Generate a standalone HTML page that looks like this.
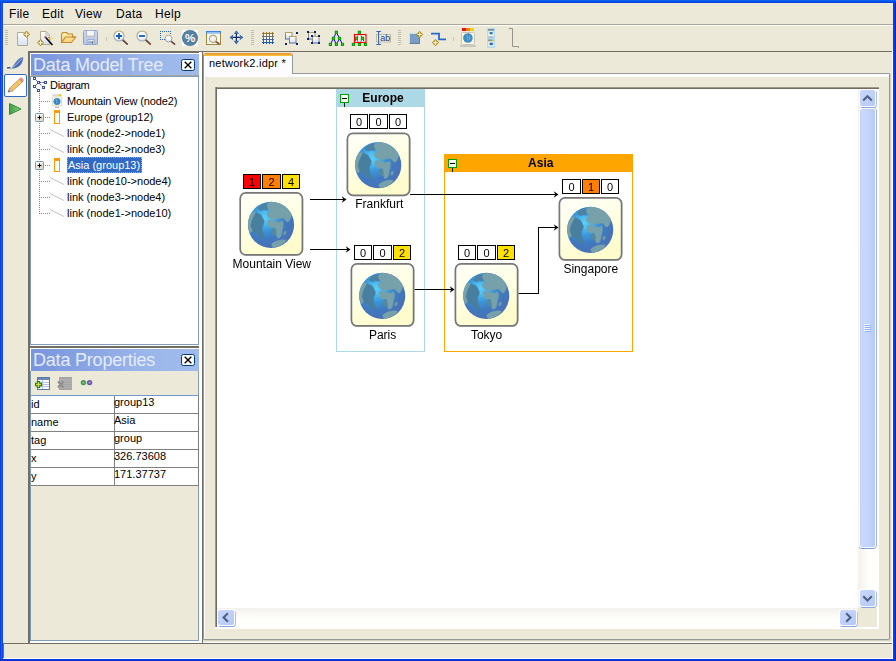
<!DOCTYPE html>
<html>
<head>
<meta charset="utf-8">
<title>network2.idpr</title>
<style>
html,body{margin:0;padding:0;}
body{width:896px;height:661px;position:relative;overflow:hidden;background:#0b35dc;font-family:"Liberation Sans","DejaVu Sans",sans-serif;font-size:11px;color:#000;}
.a{position:absolute;}
#win{left:3px;top:3px;width:890px;height:656px;background:#ece9d8;}
.menu span{position:absolute;top:7px;font-size:12px;line-height:14px;white-space:nowrap;letter-spacing:0.3px;}
.hl{position:absolute;height:1px;}
.vl{position:absolute;width:1px;}
.hdr{position:absolute;left:31px;width:168px;height:22px;background:linear-gradient(90deg,#7995de 0%,#8aa5e3 35%,#9ab5e9 65%,#a0bbeb 100%);}
.hdr .t{position:absolute;left:2px;top:0px;font-size:18px;line-height:22px;color:#e4ebfb;letter-spacing:-0.2px;white-space:nowrap;}
.xbtn{position:absolute;left:149px;top:4px;width:11px;height:10px;border:1px solid #000;background:#fff;border-radius:1px;}
.tree div{position:absolute;left:67px;height:16px;line-height:16px;font-size:11px;white-space:nowrap;}
.tbl div{position:absolute;font-size:11px;line-height:13px;white-space:nowrap;}
.lbl{position:absolute;font-size:12px;line-height:14px;text-align:center;white-space:nowrap;letter-spacing:0.45px;}
.bd{position:absolute;width:17px;height:12px;border:1px solid #000;background:#fff;font-size:11px;line-height:13px;text-align:center;}
</style>
</head>
<body>
<div class="a" style="left:0;top:0;width:896px;height:3px;background:linear-gradient(#0a6af2,#0a50ea 50%,#0a3cde)"></div>
<div class="a" style="left:0;top:2px;width:3px;height:659px;background:linear-gradient(90deg,#0a36d8,#1c58ee 50%,#0a44e6)"></div>
<div class="a" style="left:893px;top:2px;width:3px;height:659px;background:linear-gradient(90deg,#0a40e8,#0a3ae0 60%,#001ca8)"></div>
<div class="a" style="left:0;top:659px;width:896px;height:2px;background:linear-gradient(#0a3ee6,#0a2cc8)"></div>
<div id="win" class="a"></div>
<div class="a" style="left:892px;top:51px;width:1px;height:608px;background:#fff"></div>
<div class="a" style="left:3px;top:658px;width:890px;height:1px;background:#fff"></div>
<div class="a" style="left:203px;top:642px;width:690px;height:1px;background:#fff"></div>

<!-- MENU BAR -->
<div class="menu a" style="left:0;top:0;width:896px;height:24px;">
<span style="left:9px">File</span><span style="left:42px">Edit</span><span style="left:75px">View</span><span style="left:116px">Data</span><span style="left:155px">Help</span>
</div>
<div class="hl" style="left:3px;top:24px;width:890px;background:#aca899"></div>
<div class="hl" style="left:3px;top:25px;width:890px;background:#fff"></div>

<!-- TOOLBAR placeholder -->
<div id="toolbar" class="a" style="left:3px;top:26px;width:890px;height:25px;"><svg class="a" style="left:0;top:0" width="890" height="25" viewBox="3 26 890 25" font-family="Liberation Sans, sans-serif">
<defs>
<linearGradient id="pg" x1="0" y1="0" x2="0" y2="1"><stop offset="0" stop-color="#ffffff"/><stop offset="1" stop-color="#d4e0f6"/></linearGradient>
<linearGradient id="lensg" x1="0" y1="0" x2="0" y2="1"><stop offset="0" stop-color="#ffffff"/><stop offset="0.7" stop-color="#f4f4f4"/><stop offset="1" stop-color="#d8dde4"/></linearGradient>
<linearGradient id="lensr" x1="0" y1="0" x2="0" y2="1"><stop offset="0" stop-color="#b4a26e"/><stop offset="1" stop-color="#97a7c9"/></linearGradient>
<linearGradient id="gridg" x1="0" y1="32" x2="0" y2="44" gradientUnits="userSpaceOnUse"><stop offset="0" stop-color="#a57d1c"/><stop offset="0.5" stop-color="#5b7080"/><stop offset="1" stop-color="#0b55b8"/></linearGradient>
<linearGradient id="sqb" x1="0" y1="0" x2="0" y2="1"><stop offset="0" stop-color="#b7a064"/><stop offset="1" stop-color="#5a6a9a"/></linearGradient>
<linearGradient id="saveg" x1="0" y1="0" x2="0" y2="1"><stop offset="0" stop-color="#d2dbee"/><stop offset="1" stop-color="#b4c3e2"/></linearGradient>
<linearGradient id="foldg" x1="0" y1="0" x2="0" y2="1"><stop offset="0" stop-color="#fff0b8"/><stop offset="1" stop-color="#f8d078"/></linearGradient>
</defs>
<rect x="5" y="30" width="3" height="1" fill="#c1bda9"/><rect x="5" y="32" width="3" height="1" fill="#c1bda9"/><rect x="5" y="34" width="3" height="1" fill="#c1bda9"/><rect x="5" y="36" width="3" height="1" fill="#c1bda9"/><rect x="5" y="38" width="3" height="1" fill="#c1bda9"/><rect x="5" y="40" width="3" height="1" fill="#c1bda9"/><rect x="5" y="42" width="3" height="1" fill="#c1bda9"/><rect x="5" y="44" width="3" height="1" fill="#c1bda9"/>
<!-- new -->
<path d="M17.5 32.5 H24 L27.5 36 V45.5 H17.5 Z" fill="url(#pg)" stroke="#b3a890" stroke-width="1"/>
<path d="M26.5 31.1 L29.7 34.3 L26.5 37.5 L23.3 34.3 Z" fill="#b98f18" stroke="#a07a10" stroke-width="0.6"/><path d="M26.5 32.2 V36.4 M24.4 34.3 H28.6" stroke="#fff8e0" stroke-width="1.1"/>
<!-- wizard -->
<path d="M40.5 31.5 H46 L49.5 35 V44.5 H40.5 Z" fill="url(#pg)" stroke="#b3a890" stroke-width="1"/>
<path d="M46 31.5 V35 H49.5" fill="none" stroke="#b3a890" stroke-width="0.8"/>
<path d="M45.3 37 L52.4 45" stroke="#101020" stroke-width="1.8"/><path d="M44.8 36.4 L46.2 38" stroke="#d0483c" stroke-width="1.8"/>
<rect x="49" y="35.5" width="1" height="1" fill="#f0d020"/><rect x="51" y="36.5" width="1" height="1" fill="#f0d020"/><rect x="50" y="38.5" width="1" height="1" fill="#e8b020"/><rect x="52" y="38" width="1" height="1" fill="#f0d020"/><rect x="48" y="37" width="1" height="1" fill="#d07030"/>
<path d="M40.5 39.4 L43.7 42.6 L40.5 45.8 L37.3 42.6 Z" fill="#b98f18" stroke="#a07a10" stroke-width="0.6"/><path d="M40.5 40.5 V44.7 M38.4 42.6 H42.6" stroke="#fff8e0" stroke-width="1.1"/>
<!-- open -->
<path d="M61.5 42.5 V34 L63 32.5 H66.5 L68 34 H72.5 V37 H75.8 L71.5 42.5 Z" fill="url(#foldg)" stroke="#c48a2c" stroke-width="1.1" stroke-linejoin="round"/>
<path d="M61.8 42.3 L65.5 37 H75.8" fill="none" stroke="#c48a2c" stroke-width="1.1"/>
<!-- save -->
<rect x="83.5" y="30.5" width="14" height="14" rx="1.2" fill="url(#saveg)" stroke="#8fa3cf" stroke-width="1"/>
<rect x="86.5" y="30.5" width="8" height="6" fill="#f4f6fb" stroke="#9aaad0" stroke-width="0.8"/><rect x="87" y="35.3" width="7" height="1" fill="#f0d8a0"/>
<rect x="88" y="39.5" width="6" height="5" fill="#dfe6f4" stroke="#8fa3cf" stroke-width="0.8"/><rect x="88.5" y="41.5" width="3.5" height="2" fill="#7fa0e0"/><rect x="92" y="41" width="1" height="3" fill="#7a8a6a"/>
<rect x="106" y="37" width="1" height="4" fill="#c8c4b0"/>
<!-- zoom in / out -->
<path d="M122.25 39.5 L127.25 44.1" stroke="#6e463c" stroke-width="1.7" stroke-linecap="round"/><circle cx="119" cy="36" r="5" fill="url(#lensg)" stroke="url(#lensr)" stroke-width="1.1"/><path d="M116 36 H122 M119 33 V39" stroke="#1560b0" stroke-width="1.8"/>
<path d="M145.25 39.5 L150.25 44.1" stroke="#6e463c" stroke-width="1.7" stroke-linecap="round"/><circle cx="142" cy="36" r="5" fill="url(#lensg)" stroke="url(#lensr)" stroke-width="1.1"/><path d="M139 36 H145" stroke="#1560b0" stroke-width="1.8"/>
<!-- zoom rect -->
<rect x="160" y="31" width="1" height="1" fill="#2464c4"/><rect x="162" y="31" width="1" height="1" fill="#2464c4"/><rect x="164" y="31" width="1" height="1" fill="#2464c4"/><rect x="166" y="31" width="1" height="1" fill="#2464c4"/><rect x="168" y="31" width="1" height="1" fill="#2464c4"/><rect x="170" y="31" width="1" height="1" fill="#2464c4"/><rect x="160" y="33" width="1" height="1" fill="#2464c4"/><rect x="160" y="35" width="1" height="1" fill="#2464c4"/><rect x="160" y="37" width="1" height="1" fill="#2464c4"/><rect x="160" y="39" width="1" height="1" fill="#2464c4"/><rect x="162" y="39" width="1" height="1" fill="#2464c4"/><rect x="164" y="39" width="1" height="1" fill="#2464c4"/><rect x="170" y="33" width="1" height="1" fill="#2464c4"/>
<path d="M170.6 40.8 L174.6 44.2" stroke="#6e463c" stroke-width="1.6" stroke-linecap="round"/><circle cx="168.5" cy="38.5" r="3.4" fill="url(#lensg)" stroke="url(#lensr)" stroke-width="1"/>
<!-- percent -->
<rect x="182" y="30" width="16" height="16" fill="#fff"/><circle cx="190" cy="38" r="8" fill="#4f7c9e"/><circle cx="190" cy="38" r="6" fill="none" stroke="#6a92b0" stroke-width="1" opacity="0.6"/>
<text x="190" y="42" text-anchor="middle" font-size="11.5" font-weight="bold" fill="#fff">%</text>
<!-- fit -->
<rect x="206.5" y="31.5" width="14" height="13" fill="#eefaff" stroke="#a28a3a" stroke-width="1"/><rect x="206" y="31" width="15" height="2.4" fill="#3c84dc"/><rect x="207" y="32" width="13" height="0.8" fill="#a8d0f8"/>
<path d="M215.5 41.5 L219.5 44" stroke="#8a5040" stroke-width="1.6"/><circle cx="213" cy="38.8" r="3.7" fill="#f2f2f2" stroke="#a89048" stroke-width="1"/>
<!-- pan -->
<path d="M236.4 31 V43.8 M230 37.4 H242.8" stroke="#1c2468" stroke-width="1.2"/>
<path d="M236.4 30.6 L239.2 34 H233.6 Z M236.4 44.2 L239.2 40.8 H233.6 Z M229.6 37.4 L233 34.6 V40.2 Z M243.2 37.4 L239.8 34.6 V40.2 Z" fill="#3a6ea8"/>
<rect x="251" y="30" width="3" height="1" fill="#c1bda9"/><rect x="251" y="32" width="3" height="1" fill="#c1bda9"/><rect x="251" y="34" width="3" height="1" fill="#c1bda9"/><rect x="251" y="36" width="3" height="1" fill="#c1bda9"/><rect x="251" y="38" width="3" height="1" fill="#c1bda9"/><rect x="251" y="40" width="3" height="1" fill="#c1bda9"/><rect x="251" y="42" width="3" height="1" fill="#c1bda9"/><rect x="251" y="44" width="3" height="1" fill="#c1bda9"/>
<!-- grid -->
<rect x="263" y="33" width="10" height="10" fill="#fff"/>
<path d="M263.5 32 V44 M266.5 32 V44 M269.5 32 V44 M272.5 32 V44 M262 33.5 H274 M262 36.5 H274 M262 39.5 H274 M262 42.5 H274" stroke="url(#gridg)" stroke-width="1.1"/>
<!-- group1 -->
<rect x="285.5" y="32.5" width="6.5" height="6.5" fill="url(#pg)" stroke="url(#sqb)" stroke-width="1"/><rect x="289.5" y="36.5" width="6.5" height="6.5" fill="url(#pg)" stroke="url(#sqb)" stroke-width="1"/>
<rect x="296" y="32" width="2" height="2" fill="#0a246a"/><rect x="285" y="43" width="2" height="2" fill="#0a246a"/><rect x="296" y="43" width="2" height="2" fill="#0a246a"/>
<!-- group2 -->
<rect x="308.5" y="32.5" width="6.5" height="6.5" fill="url(#pg)" stroke="url(#sqb)" stroke-width="1"/><rect x="312.5" y="36.5" width="6.5" height="6.5" fill="url(#pg)" stroke="url(#sqb)" stroke-width="1"/>
<rect x="307" y="31" width="2" height="2" fill="#0a246a"/><rect x="314" y="31" width="2" height="2" fill="#0a246a"/><rect x="307" y="38" width="2" height="2" fill="#0a246a"/><rect x="311" y="35" width="2" height="2" fill="#0a246a"/><rect x="318" y="35" width="2" height="2" fill="#0a246a"/><rect x="311" y="42" width="2" height="2" fill="#0a246a"/><rect x="318" y="42" width="2" height="2" fill="#0a246a"/>
<!-- tree1/tree2 -->
<path d="M336.4 32.3 L330.4 44.4 M336.4 32.3 L342.5 44.4 M333.4 38.4 L336.4 44.4 L339.5 38.4" stroke="#0000ff" stroke-width="1" fill="none"/><rect x="334.8" y="30.7" width="3.2" height="3.2" fill="#0c9c0c"/><rect x="335.9" y="31.8" width="1" height="1" fill="#58d058"/><rect x="331.8" y="36.8" width="3.2" height="3.2" fill="#0c9c0c"/><rect x="332.9" y="37.9" width="1" height="1" fill="#58d058"/><rect x="337.9" y="36.8" width="3.2" height="3.2" fill="#0c9c0c"/><rect x="339.0" y="37.9" width="1" height="1" fill="#58d058"/><rect x="328.8" y="42.8" width="3.2" height="3.2" fill="#0c9c0c"/><rect x="329.9" y="43.9" width="1" height="1" fill="#58d058"/><rect x="334.8" y="42.8" width="3.2" height="3.2" fill="#0c9c0c"/><rect x="335.9" y="43.9" width="1" height="1" fill="#58d058"/><rect x="340.9" y="42.8" width="3.2" height="3.2" fill="#0c9c0c"/><rect x="342.0" y="43.9" width="1" height="1" fill="#58d058"/>
<path d="M359.4 32.3 L353.4 44.4 M359.4 32.3 L365.5 44.4 M356.4 38.4 L359.4 44.4 L362.5 38.4" stroke="#0000ff" stroke-width="1" fill="none" stroke-dasharray="1.2 1"/><rect x="357.8" y="30.7" width="3.2" height="3.2" fill="#0c9c0c"/><rect x="358.9" y="31.8" width="1" height="1" fill="#58d058"/><rect x="354.8" y="36.8" width="3.2" height="3.2" fill="#0c9c0c"/><rect x="355.9" y="37.9" width="1" height="1" fill="#58d058"/><rect x="360.9" y="36.8" width="3.2" height="3.2" fill="#0c9c0c"/><rect x="362.0" y="37.9" width="1" height="1" fill="#58d058"/><rect x="351.8" y="42.8" width="3.2" height="3.2" fill="#0c9c0c"/><rect x="352.9" y="43.9" width="1" height="1" fill="#58d058"/><rect x="357.8" y="42.8" width="3.2" height="3.2" fill="#0c9c0c"/><rect x="358.9" y="43.9" width="1" height="1" fill="#58d058"/><rect x="363.9" y="42.8" width="3.2" height="3.2" fill="#0c9c0c"/><rect x="365.0" y="43.9" width="1" height="1" fill="#58d058"/><rect x="354.5" y="34.5" width="11.5" height="8" fill="none" stroke="#ff0000" stroke-width="1.1"/>
<!-- ab -->
<rect x="376.5" y="34.5" width="14" height="7.5" fill="#e8f0f8" stroke="#b8b090" stroke-width="0.8"/>
<text x="385.3" y="41.2" text-anchor="middle" font-size="9" fill="#1c3464">ab</text>
<path d="M376.3 31.5 H381 M376.3 44.5 H381 M378.6 31.5 V44.5" stroke="#3a68b0" stroke-width="1.1" fill="none"/>
<rect x="398" y="30" width="3" height="1" fill="#c1bda9"/><rect x="398" y="32" width="3" height="1" fill="#c1bda9"/><rect x="398" y="34" width="3" height="1" fill="#c1bda9"/><rect x="398" y="36" width="3" height="1" fill="#c1bda9"/><rect x="398" y="38" width="3" height="1" fill="#c1bda9"/><rect x="398" y="40" width="3" height="1" fill="#c1bda9"/><rect x="398" y="42" width="3" height="1" fill="#c1bda9"/><rect x="398" y="44" width="3" height="1" fill="#c1bda9"/>
<!-- shape -->
<rect x="409" y="33" width="11" height="11" fill="#7b9cc4"/><path d="M409.5 44 V33.5 H420" fill="none" stroke="#b4ecf2" stroke-width="1"/><path d="M409.5 43.5 H419.5 V34" fill="none" stroke="#5f8098" stroke-width="1"/>
<path d="M419.6 31.3 L422.8 34.5 L419.6 37.7 L416.4 34.5 Z" fill="#b98f18" stroke="#a07a10" stroke-width="0.6"/><path d="M419.6 32.4 V36.6 M417.5 34.5 H421.7" stroke="#fff8e0" stroke-width="1.1"/>
<!-- link -->
<path d="M431 33.6 H439 V39.4 H446" fill="none" stroke="#2a6ad2" stroke-width="1.8"/>
<path d="M435.5 39.4 L438.7 42.6 L435.5 45.8 L432.3 42.6 Z" fill="#b98f18" stroke="#a07a10" stroke-width="0.6"/><path d="M435.5 40.5 V44.7 M433.4 42.6 H437.6" stroke="#fff8e0" stroke-width="1.1"/>
<rect x="453" y="37" width="1" height="4" fill="#c8c4b0"/>
<!-- node thumb -->
<rect x="462" y="28" width="4" height="3" fill="#e81010"/><rect x="466" y="28" width="4" height="3" fill="#f08010"/><rect x="470" y="28" width="4" height="3" fill="#f0d010"/>
<rect x="461.5" y="32.5" width="13" height="12" rx="1" fill="#fdfbdc" stroke="#b8b8b0" stroke-width="0.8"/><circle cx="467.9" cy="38" r="4.8" fill="#3f8cc8"/><path d="M466.5 35 q2 2 1 6 M469 36 q1.5 2 0.5 4" stroke="#6aa8c8" stroke-width="1.2" fill="none"/>
<rect x="460" y="45.6" width="16" height="1" fill="#9a9a9a" opacity="0.8"/>
<!-- list -->
<rect x="487" y="28" width="8" height="20" fill="#b2daf0"/>
<rect x="488" y="29" width="6" height="1.6" fill="#7a8c9c"/><rect x="488.3" y="31.4" width="5.4" height="4.8" fill="#fdf8d8"/><rect x="489.6" y="32" width="3" height="2.4" fill="#2a78d0"/><rect x="488.5" y="36.6" width="4.5" height="0.8" fill="#8a9aa8"/>
<rect x="488" y="39.5" width="4" height="1.4" fill="#8a8c8c"/><rect x="492" y="39.8" width="1.6" height="1.4" fill="#e8c020"/><rect x="488.3" y="41.6" width="5.4" height="4.8" fill="#fdf8d8"/><rect x="489.6" y="42.6" width="3.2" height="2.6" fill="#2a68c0"/>
<!-- bracket -->
<path d="M508.8 28.5 H512.5 V46.5 H518.5 V48" fill="none" stroke="#8c8a80" stroke-width="0.9"/>
</svg></div>
<div class="hl" style="left:28px;top:51px;width:864px;background:#716f64"></div>

<!-- LEFT TOOL STRIP placeholder -->
<div id="strip" class="a" style="left:3px;top:52px;width:25px;height:590px;"><svg class="a" style="left:0;top:0" width="25" height="70" viewBox="3 52 25 70">
<defs>
<linearGradient id="qg" x1="0" y1="0" x2="1" y2="1"><stop offset="0" stop-color="#7f9fd8"/><stop offset="1" stop-color="#2f4f9c"/></linearGradient>
<linearGradient id="plg" x1="0" y1="0" x2="1" y2="0"><stop offset="0" stop-color="#3c9c40"/><stop offset="1" stop-color="#8ed08e"/></linearGradient>
</defs>
<path d="M7 67.8 H10.5" stroke="#2c4a90" stroke-width="1.4"/>
<path d="M11.3 68.7 C13 66.5 14.8 62.5 17.8 59.8 C19.8 58 22 57.2 23.2 57.4 C23.2 60 22.4 63 20.2 65.2 C18 67.4 15 68.6 11.3 68.7 Z" fill="url(#qg)"/>
<path d="M12.5 68 L22 59" stroke="#c8d8f4" stroke-width="0.6"/>
<rect x="4.5" y="74.5" width="22" height="22" rx="1.5" fill="#fff" stroke="#316ac5" stroke-width="1"/>
<path d="M8.2 92 L9.6 88.2 L19.4 79 L22.4 82 L12.4 91 Z" fill="#f2c468" stroke="#b8864a" stroke-width="0.7"/>
<path d="M19.4 79 L20.6 78 C21.6 77.4 23.6 79.2 23.2 80.6 L22.4 82 Z" fill="#f09090" stroke="#c86868" stroke-width="0.6"/>
<path d="M8.2 92 L9.6 88.2 L12.4 91 Z" fill="#e8d0a8" stroke="#8a7a6a" stroke-width="0.5"/><path d="M8.2 92 L8.9 90.2 L10 91.4 Z" fill="#3a4a8a"/>
<path d="M9.5 103.5 L21 109 L9.5 114.5 Z" fill="url(#plg)" stroke="#2f8f34" stroke-width="1" stroke-linejoin="round"/>
</svg></div>

<!-- LEFT PANEL -->
<div id="left" class="a" style="left:0;top:0;width:203px;height:661px;">
<!-- bevel borders of the two left panels -->
<div class="a" style="left:28px;top:51px;width:2px;height:592px;background:#716f64"></div>
<div class="a" style="left:28px;top:51px;width:173px;height:2px;background:#716f64"></div>
<div class="a" style="left:30px;top:53px;width:171px;height:293px;background:#fff"></div>
<div class="a" style="left:30px;top:346px;width:171px;height:2px;background:#716f64"></div>
<div class="a" style="left:30px;top:348px;width:171px;height:295px;background:#fff"></div>
<!-- top panel: Data Model Tree -->
<div class="a" style="left:30px;top:53px;width:169px;height:292px;background:#7f9db9"></div>
<div class="a" style="left:30px;top:53px;width:169px;height:1px;background:#fff"></div>
<div class="a" style="left:30px;top:53px;width:1px;height:23px;background:#fff"></div>
<div class="hdr" style="top:54px;height:21px;"><span class="t">Data Model Tree</span>
 <svg class="a" style="left:150px;top:5px" width="14" height="12" viewBox="0 0 14 12"><rect x="0.5" y="0.5" width="13" height="11" rx="1.8" fill="#fdfcf6" stroke="#003c74"/><path d="M3.7 2.7 L10.3 9.3 M10.3 2.7 L3.7 9.3" stroke="#000" stroke-width="1.35"/></svg>
</div>
<div class="a" style="left:31px;top:75px;width:167px;height:1px;background:#aca899"></div>
<div class="a" style="left:31px;top:77px;width:167px;height:267px;background:#fff"></div>
<div id="tree" class="tree a" style="left:0;top:77px;width:200px;height:267px;">
<svg class="a" style="left:31px;top:0" width="36" height="267" viewBox="31 77 36 267"><defs><linearGradient id="pmg" x1="0" y1="0" x2="1" y2="1"><stop offset="0" stop-color="#ffffff"/><stop offset="1" stop-color="#d8d0bc"/></linearGradient></defs><path d="M34.5 78.5 L38.5 82.5 H45.5 M38.5 82.5 L34.5 86.5 L38.5 90.5 M38.5 82.5 L43.5 87.5" stroke="#3c4ea0" stroke-width="1" fill="none" stroke-dasharray="1.5 0.9"/><rect x="33.5" y="77.5" width="2" height="2" fill="#fff" stroke="#3c4ea0" stroke-width="1"/><rect x="37.5" y="81.5" width="2" height="2" fill="#fff" stroke="#3c4ea0" stroke-width="1"/><rect x="44.5" y="81.5" width="2" height="2" fill="#fff" stroke="#3c4ea0" stroke-width="1"/><rect x="33.5" y="85.5" width="2" height="2" fill="#fff" stroke="#3c4ea0" stroke-width="1"/><rect x="42.5" y="86.5" width="2" height="2" fill="#fff" stroke="#3c4ea0" stroke-width="1"/><rect x="37.5" y="89.5" width="2" height="2" fill="#fff" stroke="#3c4ea0" stroke-width="1"/><rect x="39" y="93" width="1" height="1" fill="#8a8a8a"/><rect x="39" y="95" width="1" height="1" fill="#8a8a8a"/><rect x="39" y="97" width="1" height="1" fill="#8a8a8a"/><rect x="39" y="99" width="1" height="1" fill="#8a8a8a"/><rect x="39" y="101" width="1" height="1" fill="#8a8a8a"/><rect x="39" y="103" width="1" height="1" fill="#8a8a8a"/><rect x="39" y="105" width="1" height="1" fill="#8a8a8a"/><rect x="39" y="107" width="1" height="1" fill="#8a8a8a"/><rect x="39" y="109" width="1" height="1" fill="#8a8a8a"/><rect x="39" y="111" width="1" height="1" fill="#8a8a8a"/><rect x="39" y="113" width="1" height="1" fill="#8a8a8a"/><rect x="39" y="115" width="1" height="1" fill="#8a8a8a"/><rect x="39" y="117" width="1" height="1" fill="#8a8a8a"/><rect x="39" y="119" width="1" height="1" fill="#8a8a8a"/><rect x="39" y="121" width="1" height="1" fill="#8a8a8a"/><rect x="39" y="123" width="1" height="1" fill="#8a8a8a"/><rect x="39" y="125" width="1" height="1" fill="#8a8a8a"/><rect x="39" y="127" width="1" height="1" fill="#8a8a8a"/><rect x="39" y="129" width="1" height="1" fill="#8a8a8a"/><rect x="39" y="131" width="1" height="1" fill="#8a8a8a"/><rect x="39" y="133" width="1" height="1" fill="#8a8a8a"/><rect x="39" y="135" width="1" height="1" fill="#8a8a8a"/><rect x="39" y="137" width="1" height="1" fill="#8a8a8a"/><rect x="39" y="139" width="1" height="1" fill="#8a8a8a"/><rect x="39" y="141" width="1" height="1" fill="#8a8a8a"/><rect x="39" y="143" width="1" height="1" fill="#8a8a8a"/><rect x="39" y="145" width="1" height="1" fill="#8a8a8a"/><rect x="39" y="147" width="1" height="1" fill="#8a8a8a"/><rect x="39" y="149" width="1" height="1" fill="#8a8a8a"/><rect x="39" y="151" width="1" height="1" fill="#8a8a8a"/><rect x="39" y="153" width="1" height="1" fill="#8a8a8a"/><rect x="39" y="155" width="1" height="1" fill="#8a8a8a"/><rect x="39" y="157" width="1" height="1" fill="#8a8a8a"/><rect x="39" y="159" width="1" height="1" fill="#8a8a8a"/><rect x="39" y="161" width="1" height="1" fill="#8a8a8a"/><rect x="39" y="163" width="1" height="1" fill="#8a8a8a"/><rect x="39" y="165" width="1" height="1" fill="#8a8a8a"/><rect x="39" y="167" width="1" height="1" fill="#8a8a8a"/><rect x="39" y="169" width="1" height="1" fill="#8a8a8a"/><rect x="39" y="171" width="1" height="1" fill="#8a8a8a"/><rect x="39" y="173" width="1" height="1" fill="#8a8a8a"/><rect x="39" y="175" width="1" height="1" fill="#8a8a8a"/><rect x="39" y="177" width="1" height="1" fill="#8a8a8a"/><rect x="39" y="179" width="1" height="1" fill="#8a8a8a"/><rect x="39" y="181" width="1" height="1" fill="#8a8a8a"/><rect x="39" y="183" width="1" height="1" fill="#8a8a8a"/><rect x="39" y="185" width="1" height="1" fill="#8a8a8a"/><rect x="39" y="187" width="1" height="1" fill="#8a8a8a"/><rect x="39" y="189" width="1" height="1" fill="#8a8a8a"/><rect x="39" y="191" width="1" height="1" fill="#8a8a8a"/><rect x="39" y="193" width="1" height="1" fill="#8a8a8a"/><rect x="39" y="195" width="1" height="1" fill="#8a8a8a"/><rect x="39" y="197" width="1" height="1" fill="#8a8a8a"/><rect x="39" y="199" width="1" height="1" fill="#8a8a8a"/><rect x="39" y="201" width="1" height="1" fill="#8a8a8a"/><rect x="39" y="203" width="1" height="1" fill="#8a8a8a"/><rect x="39" y="205" width="1" height="1" fill="#8a8a8a"/><rect x="39" y="207" width="1" height="1" fill="#8a8a8a"/><rect x="39" y="209" width="1" height="1" fill="#8a8a8a"/><rect x="39" y="211" width="1" height="1" fill="#8a8a8a"/><rect x="39" y="213" width="1" height="1" fill="#8a8a8a"/><rect x="41" y="101" width="1" height="1" fill="#8a8a8a"/><rect x="43" y="101" width="1" height="1" fill="#8a8a8a"/><rect x="45" y="101" width="1" height="1" fill="#8a8a8a"/><rect x="47" y="101" width="1" height="1" fill="#8a8a8a"/><rect x="49" y="101" width="1" height="1" fill="#8a8a8a"/><rect x="35.5" y="113.5" width="8" height="8" rx="1" fill="url(#pmg)" stroke="#7898b5" stroke-width="1"/><path d="M37.5 117.5 H41.5 M39.5 115.5 V119.5" stroke="#000" stroke-width="1"/><rect x="45" y="117" width="1" height="1" fill="#8a8a8a"/><rect x="47" y="117" width="1" height="1" fill="#8a8a8a"/><rect x="49" y="117" width="1" height="1" fill="#8a8a8a"/><rect x="54.5" y="110.5" width="5" height="13" fill="#fff" stroke="#ff9a00" stroke-width="1"/><rect x="54" y="110" width="6" height="3" fill="#ff9a00"/><rect x="41" y="133" width="1" height="1" fill="#8a8a8a"/><rect x="43" y="133" width="1" height="1" fill="#8a8a8a"/><rect x="45" y="133" width="1" height="1" fill="#8a8a8a"/><rect x="47" y="133" width="1" height="1" fill="#8a8a8a"/><rect x="49" y="133" width="1" height="1" fill="#8a8a8a"/><rect x="41" y="149" width="1" height="1" fill="#8a8a8a"/><rect x="43" y="149" width="1" height="1" fill="#8a8a8a"/><rect x="45" y="149" width="1" height="1" fill="#8a8a8a"/><rect x="47" y="149" width="1" height="1" fill="#8a8a8a"/><rect x="49" y="149" width="1" height="1" fill="#8a8a8a"/><rect x="35.5" y="161.5" width="8" height="8" rx="1" fill="url(#pmg)" stroke="#7898b5" stroke-width="1"/><path d="M37.5 165.5 H41.5 M39.5 163.5 V167.5" stroke="#000" stroke-width="1"/><rect x="45" y="165" width="1" height="1" fill="#8a8a8a"/><rect x="47" y="165" width="1" height="1" fill="#8a8a8a"/><rect x="49" y="165" width="1" height="1" fill="#8a8a8a"/><rect x="54.5" y="158.5" width="5" height="13" fill="#fff" stroke="#ff9a00" stroke-width="1"/><rect x="54" y="158" width="6" height="3" fill="#ff9a00"/><rect x="41" y="181" width="1" height="1" fill="#8a8a8a"/><rect x="43" y="181" width="1" height="1" fill="#8a8a8a"/><rect x="45" y="181" width="1" height="1" fill="#8a8a8a"/><rect x="47" y="181" width="1" height="1" fill="#8a8a8a"/><rect x="49" y="181" width="1" height="1" fill="#8a8a8a"/><rect x="41" y="197" width="1" height="1" fill="#8a8a8a"/><rect x="43" y="197" width="1" height="1" fill="#8a8a8a"/><rect x="45" y="197" width="1" height="1" fill="#8a8a8a"/><rect x="47" y="197" width="1" height="1" fill="#8a8a8a"/><rect x="49" y="197" width="1" height="1" fill="#8a8a8a"/><rect x="41" y="213" width="1" height="1" fill="#8a8a8a"/><rect x="43" y="213" width="1" height="1" fill="#8a8a8a"/><rect x="45" y="213" width="1" height="1" fill="#8a8a8a"/><rect x="47" y="213" width="1" height="1" fill="#8a8a8a"/><rect x="49" y="213" width="1" height="1" fill="#8a8a8a"/><path d="M50.5 129.8 L64 136.5" stroke="#c0c0c0" stroke-width="1"/><path d="M50.5 145.8 L64 152.5" stroke="#c0c0c0" stroke-width="1"/><path d="M50.5 177.8 L64 184.5" stroke="#c0c0c0" stroke-width="1"/><path d="M50.5 193.8 L64 200.5" stroke="#c0c0c0" stroke-width="1"/><path d="M50.5 209.8 L64 216.5" stroke="#c0c0c0" stroke-width="1"/><rect x="52.5" y="94.3" width="6" height="1.8" fill="#d8d8d8"/><rect x="58.5" y="94.3" width="3" height="1.8" fill="#e8c810"/><rect x="52.4" y="96.8" width="9.2" height="9.2" rx="1" fill="#fdfbdc" stroke="#c8c8c0" stroke-width="0.7"/><circle cx="57" cy="101.4" r="3.5" fill="#3a86c6"/><path d="M56 99 q1.5 1.5 0.6 4.5" stroke="#6ab0d8" stroke-width="1" fill="none"/><rect x="55" y="106.8" width="4" height="0.9" fill="#a0a0a0"/></svg>
<div style="left:50px;top:0px;letter-spacing:-0.3px">Diagram</div>
<div style="top:16px;letter-spacing:-0.12px">Mountain View (node2)</div>
<div style="top:32px">Europe (group12)</div>
<div style="top:48px">link (node2-&gt;node1)</div>
<div style="top:64px">link (node2-&gt;node3)</div>
<div style="top:80px;left:67px;height:16px;line-height:16px;width:75px;background:#316ac5;color:#fff;outline:1px dotted #d2a25e;outline-offset:-1px;padding-left:1px;box-sizing:border-box">Asia (group13)</div>
<div style="top:96px">link (node10-&gt;node4)</div>
<div style="top:112px">link (node3-&gt;node4)</div>
<div style="top:128px">link (node1-&gt;node10)</div>
</div>
<!-- bottom panel: Data Properties -->
<div class="a" style="left:30px;top:348px;width:169px;height:293px;background:#7f9db9"></div>
<div class="a" style="left:31px;top:349px;width:167px;height:291px;background:#ece9d8"></div>
<div class="a" style="left:30px;top:348px;width:169px;height:1px;background:#fff"></div>
<div class="a" style="left:30px;top:348px;width:1px;height:23px;background:#fff"></div>
<div class="hdr" style="top:349px;height:22px;"><span class="t">Data Properties</span>
 <svg class="a" style="left:150px;top:5px" width="14" height="12" viewBox="0 0 14 12"><rect x="0.5" y="0.5" width="13" height="11" rx="1.8" fill="#fdfcf6" stroke="#003c74"/><path d="M3.7 2.7 L10.3 9.3 M10.3 2.7 L3.7 9.3" stroke="#000" stroke-width="1.35"/></svg>
</div>
<div id="ptools" class="a" style="left:31px;top:371px;width:167px;height:24px;"><svg class="a" style="left:0;top:0" width="167" height="24" viewBox="31 371 167 24">
<rect x="37.5" y="377.5" width="12" height="12" fill="#fff" stroke="#5a78a8" stroke-width="1"/><rect x="38" y="378" width="11" height="2" fill="#6a88b8"/>
<path d="M38 382.5 H49 M38 384.5 H49 M38 386.5 H49 M42.5 380 V389" stroke="#aebcd8" stroke-width="0.9"/>
<path d="M38.5 381 V388 M35 384.5 H42" stroke="#1e7a1e" stroke-width="3.4"/><path d="M38.5 382 V387 M36 384.5 H41" stroke="#c8dc48" stroke-width="1.4"/>
<rect x="59" y="377" width="13" height="13" fill="#a6a6a6"/><path d="M60 379.5 H72 M60 381.5 H72 M60 383.5 H72 M60 385.5 H72 M60 387.5 H72" stroke="#b4b4b4" stroke-width="0.8"/>
<path d="M58 381.5 L63.5 387.5 M63.5 381.5 L58 387.5" stroke="#8e8e8e" stroke-width="2.2"/>
<circle cx="83.4" cy="382.6" r="2.7" fill="#3f9a50"/><circle cx="83.4" cy="382.6" r="1.2" fill="#78c088"/>
<circle cx="89.6" cy="382.6" r="2.7" fill="#6858b0"/><circle cx="89.6" cy="382.6" r="1.2" fill="#9a8cd0"/>
</svg></div>
<div class="tbl a" style="left:31px;top:395px;width:168px;height:91px;background:#808080;">
 <div style="left:0;top:1px;width:83px;height:17px;background:#fff"></div><div style="left:84px;top:1px;width:83px;height:17px;background:#fff"></div>
 <div style="left:0;top:19px;width:83px;height:17px;background:#fff"></div><div style="left:84px;top:19px;width:83px;height:17px;background:#fff"></div>
 <div style="left:0;top:37px;width:83px;height:17px;background:#fff"></div><div style="left:84px;top:37px;width:83px;height:17px;background:#fff"></div>
 <div style="left:0;top:55px;width:83px;height:17px;background:#fff"></div><div style="left:84px;top:55px;width:83px;height:17px;background:#fff"></div>
 <div style="left:0;top:73px;width:83px;height:17px;background:#fff"></div><div style="left:84px;top:73px;width:83px;height:17px;background:#fff"></div>
 <div style="left:0;top:0;width:168px;height:1px;background:#7397c8"></div>
 <div style="left:0px;top:3px">id</div><div style="left:83px;top:1px">group13</div>
 <div style="left:0px;top:21px">name</div><div style="left:83px;top:19px">Asia</div>
 <div style="left:0px;top:39px">tag</div><div style="left:83px;top:37px">group</div>
 <div style="left:0px;top:57px">x</div><div style="left:83px;top:55px">326.73608</div>
 <div style="left:0px;top:75px">y</div><div style="left:83px;top:73px">171.37737</div>
</div>
</div>

<!-- TAB PANE -->
<div id="tabs" class="a" style="left:0;top:0;width:896px;height:661px;">
<svg width="0" height="0" style="position:absolute"><defs>
<linearGradient id="sbg" x1="0" y1="0" x2="1" y2="1"><stop offset="0" stop-color="#cbd8fc"/><stop offset="1" stop-color="#b4c8f7"/></linearGradient>
</defs></svg>
<!-- split divider -->
<div class="a" style="left:199px;top:51px;width:3px;height:592px;background:#fff"></div>
<div class="a" style="left:202px;top:51px;width:1px;height:592px;background:#716f64"></div>
<div class="a" style="left:199px;top:51px;width:4px;height:1px;background:#716f64"></div>
<!-- tab content border -->
<div class="a" style="left:203px;top:73px;width:687px;height:567px;box-sizing:border-box;border:1px solid #919b9c;border-radius:0 0 2px 0;background:#ece9d8;box-shadow:1px 1px 0 #d3d1c1"></div>
<div class="a" style="left:204px;top:74px;width:1px;height:565px;background:#fcfcfe"></div>
<!-- tab -->
<div class="a" style="left:203px;top:53px;width:90px;height:21px;box-sizing:border-box;border:1px solid #919b9c;border-bottom:none;border-top:none;border-radius:3px 3px 0 0;background:#fcfcfe;overflow:hidden">
 <div class="a" style="left:-1px;top:0;width:90px;height:3px;background:linear-gradient(#e68b2c,#ffc73c);"></div>
 <div class="a" style="left:5px;top:4px;font-size:11px;line-height:13px;white-space:nowrap;letter-spacing:0.25px;">network2.idpr *</div>
</div>
<div class="a" style="left:204px;top:74px;width:685px;height:3px;background:#fcfcfe"></div>
<!-- scroll pane -->
<div class="a" style="left:215px;top:87px;width:664px;height:542px;background:#fff"></div>
<div class="a" style="left:215px;top:87px;width:664px;height:2px;background:linear-gradient(#9d9b8c,#9d9b8c 50%,#6f6d62 50%)"></div>
<div class="a" style="left:215px;top:87px;width:2px;height:540px;background:linear-gradient(90deg,#9d9b8c,#9d9b8c 50%,#6f6d62 50%)"></div>
<div class="a" style="left:858px;top:608px;width:19px;height:19px;background:#ece9d8"></div>
<!-- vertical scrollbar -->
<div class="a" style="left:858px;top:89px;width:19px;height:519px;background:linear-gradient(90deg,#f3f1ec,#fefefb 60%,#fefefb)"></div>
<svg class="a" style="left:859px;top:89px" width="18" height="19" viewBox="0 0 18 19"><rect x="0.7" y="1" width="17" height="18" rx="3" fill="#86a6e4"/><rect x="0" y="0" width="17" height="18" rx="2.5" fill="#fff"/><rect x="1" y="1" width="15" height="16" rx="2" fill="url(#sbg)"/><path d="M4.2 11.6 L8.5 7.3 L12.8 11.6" stroke="#4d6185" stroke-width="2.1" fill="none"/></svg><svg class="a" style="left:859px;top:589px" width="18" height="19" viewBox="0 0 18 19"><rect x="0.7" y="1" width="17" height="18" rx="3" fill="#86a6e4"/><rect x="0" y="0" width="17" height="18" rx="2.5" fill="#fff"/><rect x="1" y="1" width="15" height="16" rx="2" fill="url(#sbg)"/><path d="M4.2 7.2 L8.5 11.5 L12.8 7.2" stroke="#4d6185" stroke-width="2.1" fill="none"/></svg>
<div class="a" style="left:859px;top:108px;width:17px;height:440px;box-sizing:border-box;border:1px solid #fff;border-radius:3px;background:linear-gradient(90deg,#bccdf6 0,#c9d7fc 10%,#c5d4fb 50%,#b4caf7);box-shadow:0 1px 0 #7c9fe0,1px 0 0 #9fb6dc;"></div>
<div class="a" style="left:864px;top:324px;width:6px;height:8px;background:repeating-linear-gradient(#f4f8ff 0,#f4f8ff 1px,transparent 1px,transparent 2px)"></div>
<div class="a" style="left:865px;top:325px;width:6px;height:8px;background:repeating-linear-gradient(#8cb0f8 0,#8cb0f8 1px,transparent 1px,transparent 2px)"></div>
<!-- horizontal scrollbar -->
<div class="a" style="left:217px;top:608px;width:641px;height:19px;background:linear-gradient(#f3f1ec,#fefefb 60%,#fefefb)"></div>
<svg class="a" style="left:217px;top:609px" width="19" height="18" viewBox="0 0 19 18"><rect x="0.7" y="1" width="18" height="17" rx="3" fill="#86a6e4"/><rect x="0" y="0" width="18" height="17" rx="2.5" fill="#fff"/><rect x="1" y="1" width="16" height="15" rx="2" fill="url(#sbg)"/><path d="M10.9 4.2 L6.6 8.5 L10.9 12.8" stroke="#4d6185" stroke-width="2.1" fill="none"/></svg><svg class="a" style="left:839px;top:609px" width="19" height="18" viewBox="0 0 19 18"><rect x="0.7" y="1" width="18" height="17" rx="3" fill="#86a6e4"/><rect x="0" y="0" width="18" height="17" rx="2.5" fill="#fff"/><rect x="1" y="1" width="16" height="15" rx="2" fill="url(#sbg)"/><path d="M7.2 4.2 L11.5 8.5 L7.2 12.8" stroke="#4d6185" stroke-width="2.1" fill="none"/></svg>
<!-- diagram -->
<div id="diagram" class="a" style="left:217px;top:89px;width:641px;height:520px;overflow:hidden;will-change:transform"><svg class="a" style="left:0;top:0" width="641" height="520" viewBox="217 89 641 520" font-family="Liberation Sans, sans-serif" fill="#000">
<defs>
<linearGradient id="boxg" x1="0" y1="0" x2="0.4" y2="1"><stop offset="0" stop-color="#fffffa"/><stop offset="0.45" stop-color="#ffffe8"/><stop offset="1" stop-color="#fefccc"/></linearGradient>
<radialGradient id="globeg" cx="25.6" cy="25.8" r="31" gradientUnits="userSpaceOnUse"><stop offset="0" stop-color="#5ad0fb"/><stop offset="0.18" stop-color="#4cbcf2"/><stop offset="0.4" stop-color="#3b98da"/><stop offset="0.68" stop-color="#3f7ac0"/><stop offset="1" stop-color="#4a70b4"/></radialGradient>
<clipPath id="gclip"><circle cx="31.3" cy="32.8" r="23.1"/></clipPath>
<g id="node">
 <rect x="0.8" y="1.2" width="62.4" height="62.3" rx="6" fill="none" stroke="#dcdcdc" stroke-width="1"/>
 <rect x="0.5" y="0.9" width="62.2" height="62" rx="5.6" fill="url(#boxg)" stroke="#777777" stroke-width="1.7"/>
 <circle cx="31.3" cy="32.8" r="23.1" fill="url(#globeg)"/>
 <g clip-path="url(#gclip)" stroke-linejoin="round">
  <polygon points="18.4,15.6 21.4,12.9 25.2,11.2 27.9,12.5 27.5,15.2 29.0,17.5 27.5,18.2 24.5,17.8 21.4,18.6 19.2,17.8" fill="#4b83a6" stroke="#4b83a6" stroke-width="0.5"/>
  <polygon points="15.8,20.5 18.4,21.6 21.1,22.8 22.9,25.8 24.5,29.2 23.8,32.2 22.6,34.5 22.3,38.3 23.5,42.0 24.8,45.8 24.3,47.3 21.8,46.2 19.2,43.6 16.1,40.5 12.7,39.0 10.8,33.7 11.6,29.2 13.5,24.6" fill="#487e9e" stroke="#487e9e" stroke-width="0.5"/>
  <polygon points="10.8,21.6 13.9,19.7 15.8,20.5 13.5,24.6 11.6,29.2 10.8,33.7 12.7,39.0 10.5,40.7 8.2,35.2 8.0,30.7 9.0,25.4" fill="#79a1ab" stroke="#79a1ab" stroke-width="0.5"/>
  <polygon points="27.5,12.9 29.0,10.6 33.5,9.5 40.3,11.0 47.1,15.2 52.1,21.6 51.1,25.4 49.8,28.6 48.3,29.9 46.4,29.2 44.5,26.5 42.6,25.8 40.7,26.6 38.8,26.2 36.9,27.4 35.0,27.7 32.8,26.6 30.5,26.2 28.2,24.6 27.1,22.8 28.2,20.5 30.1,18.6 31.3,16.7 29.0,17.5 27.9,15.2" fill="#76a1ab" stroke="#76a1ab" stroke-width="0.5"/>
  <polygon points="28.2,28.8 30.5,27.8 32.8,28.3 35.4,29.2 38.1,30.3 40.7,29.9 42.6,28.8 43.5,30.7 43.4,34.5 42.5,38.3 41.9,42.0 40.7,45.1 38.8,46.2 37.2,45.4 36.6,42.0 36.2,38.3 35.4,36.4 33.5,35.6 31.6,36.1 29.7,34.9 28.4,32.2" fill="#76a1ab" stroke="#76a1ab" stroke-width="0.5"/>
  <polygon points="32.0,38.3 33.9,36.7 36.0,37.1 36.4,41.3 35.4,43.6 33.2,42.4 31.9,40.5" fill="#5589a2" stroke="#5589a2" stroke-width="0.5"/>
  <polygon points="44.5,39.4 46.0,38.9 46.4,40.5 45.3,42.8 44.0,42.4" fill="#76a1ab" stroke="#76a1ab" stroke-width="0.5"/>
  <polygon points="31.6,52.6 33.5,50.7 37.3,48.8 42.6,47.7 46.5,48.1 45.0,50.5 40.3,53.5 35.8,56.1 32.8,54.7" fill="#76a1ab" stroke="#76a1ab" stroke-width="0.5"/>
 </g>
</g>
<g id="colbtn"><path d="M4.5 9 V13" stroke="#003000" stroke-width="1"/><rect x="0.5" y="0.5" width="8" height="8" fill="#fff" stroke="#00a000" stroke-width="1"/><path d="M2 4.5 H7" stroke="#000" stroke-width="1"/></g>
<path id="ah" d="M0 0 L-4.8 -3.2 L-3.2 0 L-4.8 3.2 Z" fill="#000"/>
</defs>
<!-- Europe group -->
<rect x="336.5" y="89.5" width="88" height="262" fill="#fff" stroke="#add8e6"/>
<rect x="336" y="89" width="89" height="18" fill="#add8e6"/>
<use href="#colbtn" x="340" y="94"/>
<text x="383" y="101.5" text-anchor="middle" font-size="12" font-weight="bold">Europe</text>
<!-- Asia group -->
<rect x="444.5" y="154.5" width="188" height="197" fill="#fff" stroke="#ffa500"/>
<rect x="444" y="154" width="189" height="18" fill="#ffa500"/>
<use href="#colbtn" x="448" y="159"/>
<text x="540.8" y="166.5" text-anchor="middle" font-size="12" font-weight="bold">Asia</text>
<!-- links -->
<g stroke="#000" stroke-width="1" fill="none" shape-rendering="crispEdges">
<path d="M310 199.5 H346"/><path d="M310 249.5 H350"/><path d="M410 194.5 H558"/><path d="M414 289.5 H454"/><path d="M518 293.5 H538.5 V227.5 H558"/>
</g>
<use href="#ah" x="346.5" y="199.5"/><use href="#ah" x="350.5" y="249.5"/><use href="#ah" x="558.5" y="194.5"/><use href="#ah" x="454.5" y="289.5"/><use href="#ah" x="558.5" y="227.5"/>
<!-- nodes -->
<use href="#node" x="239.7" y="192.0"/><rect x="243.5" y="174.5" width="17" height="14" fill="#ff0000" stroke="#000" stroke-width="1"/><text x="252.0" y="186" text-anchor="middle" font-size="11">1</text><rect x="262.5" y="174.5" width="18" height="14" fill="#ff8000" stroke="#000" stroke-width="1"/><text x="271.5" y="186" text-anchor="middle" font-size="11">2</text><rect x="282.5" y="174.5" width="17" height="14" fill="#ffe100" stroke="#000" stroke-width="1"/><text x="291.0" y="186" text-anchor="middle" font-size="11">4</text><text x="271.8" y="268.1" text-anchor="middle" font-size="12">Mountain View</text>
<use href="#node" x="346.9" y="132.4"/><rect x="350.5" y="114.5" width="17" height="14" fill="#ffffff" stroke="#000" stroke-width="1"/><text x="359.0" y="126" text-anchor="middle" font-size="11">0</text><rect x="369.5" y="114.5" width="18" height="14" fill="#ffffff" stroke="#000" stroke-width="1"/><text x="378.5" y="126" text-anchor="middle" font-size="11">0</text><rect x="389.5" y="114.5" width="17" height="14" fill="#ffffff" stroke="#000" stroke-width="1"/><text x="398.0" y="126" text-anchor="middle" font-size="11">0</text><text x="379.3" y="208.4" text-anchor="middle" font-size="12">Frankfurt</text>
<use href="#node" x="350.9" y="263.05"/><rect x="354.5" y="245.5" width="17" height="14" fill="#ffffff" stroke="#000" stroke-width="1"/><text x="363.0" y="257" text-anchor="middle" font-size="11">0</text><rect x="373.5" y="245.5" width="18" height="14" fill="#ffffff" stroke="#000" stroke-width="1"/><text x="382.5" y="257" text-anchor="middle" font-size="11">0</text><rect x="393.5" y="245.5" width="17" height="14" fill="#ffe100" stroke="#000" stroke-width="1"/><text x="402.0" y="257" text-anchor="middle" font-size="11">2</text><text x="382.6" y="339.2" text-anchor="middle" font-size="12">Paris</text>
<use href="#node" x="454.9" y="263.05"/><rect x="458.5" y="245.5" width="17" height="14" fill="#ffffff" stroke="#000" stroke-width="1"/><text x="467.0" y="257" text-anchor="middle" font-size="11">0</text><rect x="477.5" y="245.5" width="18" height="14" fill="#ffffff" stroke="#000" stroke-width="1"/><text x="486.5" y="257" text-anchor="middle" font-size="11">0</text><rect x="497.5" y="245.5" width="17" height="14" fill="#ffe100" stroke="#000" stroke-width="1"/><text x="506.0" y="257" text-anchor="middle" font-size="11">2</text><text x="486.6" y="339.2" text-anchor="middle" font-size="12">Tokyo</text>
<use href="#node" x="558.9" y="197.05"/><rect x="562.5" y="179.5" width="18" height="14" fill="#ffffff" stroke="#000" stroke-width="1"/><text x="571.5" y="191" text-anchor="middle" font-size="11">0</text><rect x="582.5" y="179.5" width="17" height="14" fill="#ff8000" stroke="#000" stroke-width="1"/><text x="591.0" y="191" text-anchor="middle" font-size="11">1</text><rect x="601.5" y="179.5" width="17" height="14" fill="#ffffff" stroke="#000" stroke-width="1"/><text x="610.0" y="191" text-anchor="middle" font-size="11">0</text><text x="590.8" y="273.4" text-anchor="middle" font-size="12">Singapore</text>
</svg></div>
</div>

<!-- STATUS BAR -->
<div class="hl" style="left:3px;top:643px;width:889px;background:#716f64"></div>
<div class="vl" style="left:3px;top:643px;height:15px;background:#716f64"></div>
</body>
</html>
